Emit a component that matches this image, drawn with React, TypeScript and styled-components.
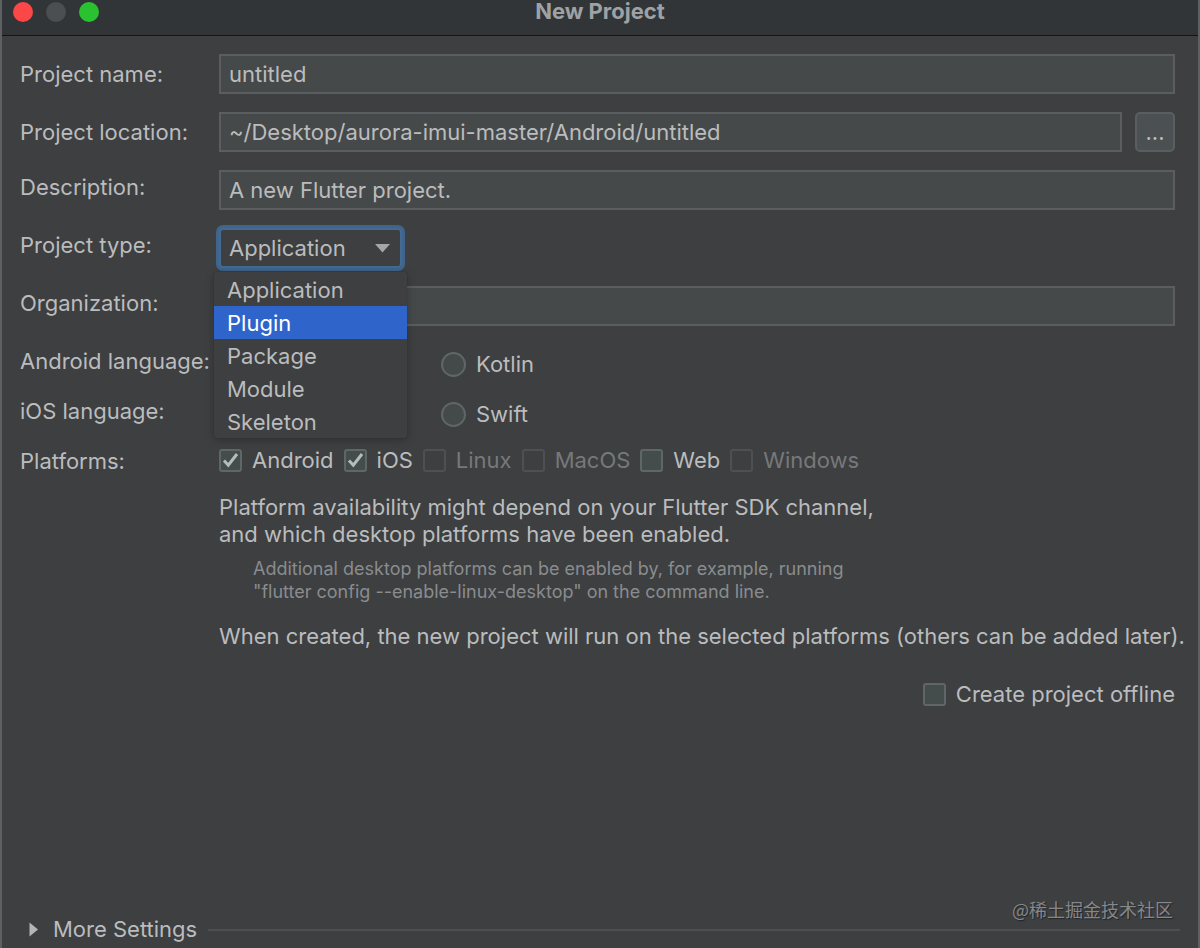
import React from "react";
import styled, { createGlobalStyle } from "styled-components";

const GlobalStyle = createGlobalStyle`
  * { box-sizing: border-box; }
  body {
    margin: 0;
    background: #3d3f41;
    color: #bbbcbd;
    font-family: Inter, "Noto Sans CJK SC", sans-serif;
    font-size: 22px;
    line-height: 27px;
  }
  input, button, select { font: inherit; color: inherit; margin: 0; }
`;

const Dialog = styled.div`
  position: relative;
  min-height: 100vh;
  display: flex;
  flex-direction: column;
  background: #3d3f41;
  border: solid #5d6062;
  border-width: 0 2px;
`;

const TitleBar = styled.header`
  display: grid;
  grid-template-columns: 1fr auto 1fr;
  height: 36px;
  background: #313537;
  border-bottom: 1px solid #131415;
`;

const Lights = styled.div`
  display: flex;
  gap: 13px;
  padding: 2px 0 0 11px;
`;

const Light = styled.button<{ $color: string }>`
  width: 20px;
  height: 20px;
  padding: 0;
  border: 0;
  border-radius: 50%;
  background: ${(p) => p.$color};
`;

const Title = styled.h1`
  margin: 0;
  font-size: 22px;
  line-height: 22px;
  font-weight: 700;
  color: #9fa2a4;
`;

const Form = styled.form`
  flex: 1;
  display: flex;
  flex-direction: column;
  padding: 18px 23px 0 18px;
`;

const Row = styled.div<{ $gap?: number }>`
  display: grid;
  grid-template-columns: 199px minmax(0, 1fr);
  align-items: start;
  margin-bottom: ${(p) => p.$gap ?? 18}px;
`;

const Label = styled.label<{ $height?: number }>`
  line-height: ${(p) => p.$height ?? 34}px;
  white-space: nowrap;
`;

const TextField = styled.input`
  display: block;
  width: 100%;
  min-width: 0;
  height: 40px;
  padding: 0 8px;
  background: #45494a;
  border: 2px solid #5a5e60;
  border-radius: 0;
  outline: none;
`;

const FieldGroup = styled.div`
  display: flex;
  gap: 13px;
`;

const BrowseButton = styled.button`
  flex: none;
  width: 40px;
  height: 40px;
  padding: 0;
  background: #4b5052;
  border: 2px solid #5a5e60;
  border-radius: 5px;
`;

const SelectWrap = styled.div`
  position: relative;
  width: 183px;
`;

const Select = styled.select`
  display: block;
  appearance: none;
  width: 100%;
  height: 40px;
  padding: 0 8px;
  background: #3d3f41;
  border: 2px solid #436a92;
  border-radius: 4px;
  box-shadow: 0 0 0 3px #3f658c;
  outline: none;
`;

const SelectArrow = styled.svg`
  position: absolute;
  top: 16px;
  right: 12px;
  pointer-events: none;
`;

const Menu = styled.ul`
  position: absolute;
  z-index: 2;
  top: 44px;
  left: -5px;
  width: 193px;
  margin: 0;
  padding: 1px 0 0;
  list-style: none;
  background: #3d3f41;
  border-radius: 2px;
  box-shadow: 0 2px 8px rgba(0, 0, 0, 0.25), 0 0 1px rgba(0, 0, 0, 0.4);
`;

const MenuItem = styled.li<{ $active?: boolean }>`
  padding: 2px 0 0 13px;
  line-height: 31px;
  background: ${(p) => (p.$active ? "#2f65ca" : "transparent")};
  color: ${(p) => (p.$active ? "#ffffff" : "inherit")};
`;

const RadioArea = styled.div`
  display: flex;
  align-items: center;
  height: 40px;
  padding-left: 222px;
`;

const Choice = styled.label<{ $disabled?: boolean }>`
  display: flex;
  align-items: center;
  gap: 10px;
  white-space: nowrap;
  color: ${(p) => (p.$disabled ? "#76797a" : "inherit")};
`;

const Radio = styled.input`
  appearance: none;
  width: 25px;
  height: 25px;
  background: #444a4a;
  border: 2px solid #5f6666;
  border-radius: 50%;
`;

const CheckBox = styled.span`
  display: grid;
  width: 23px;
  height: 23px;

  > * { grid-area: 1 / 1; }
  svg { pointer-events: none; }
`;

const CheckInput = styled.input`
  appearance: none;
  width: 23px;
  height: 23px;
  background: #444c4c;
  border: 2px solid #5f6666;
  border-radius: 3px;

  &:disabled {
    background: transparent;
    border-color: #4e5152;
  }
`;

const Platforms = styled.div`
  display: flex;
  align-items: center;
  gap: 10px;
  height: 33px;
`;

const Notes = styled.div`
  padding-left: 199px;
  white-space: nowrap;
`;

const Note = styled.p`
  margin: 0;
`;

const Hint = styled.p`
  margin: 9px 0 20px 34px;
  font-size: 18px;
  line-height: 23px;
  color: #8a8c8e;
`;

const OfflineRow = styled.div`
  display: flex;
  justify-content: flex-end;
  margin-top: 31px;
`;

const Footer = styled.footer`
  display: flex;
  align-items: center;
  gap: 11px;
  padding: 0 18px 5px 26px;
`;

const MoreButton = styled.button`
  display: flex;
  align-items: center;
  gap: 14px;
  padding: 0;
  border: 0;
  background: none;
`;

const Rule = styled.hr`
  flex: 1;
  margin: 0;
  border: 0;
  border-top: 2px solid #4d5052;
`;

const Watermark = styled.div`
  position: absolute;
  right: 25px;
  bottom: 25px;
  font-family: "Noto Sans CJK SC", sans-serif;
  font-size: 18px;
  color: #85878a;
  text-shadow: 1px 1px 1px #222426;
`;

type CheckProps = { label: string; checked?: boolean; disabled?: boolean };

function Check({ label, checked, disabled }: CheckProps) {
  return (
    <Choice $disabled={disabled}>
      <CheckBox>
        <CheckInput type="checkbox" defaultChecked={checked} disabled={disabled} />
        {checked && (
          <svg width="23" height="23" viewBox="0 0 23 23" fill="none">
            <path d="M5 11.5 9.300 16.200 18 5" stroke="#b4bcbc" strokeWidth="3" />
          </svg>
        )}
      </CheckBox>
      {label}
    </Choice>
  );
}

const projectTypes = ["Application", "Plugin", "Package", "Module", "Skeleton"];

const platforms: CheckProps[] = [
  { label: "Android", checked: true },
  { label: "iOS", checked: true },
  { label: "Linux", disabled: true },
  { label: "MacOS", disabled: true },
  { label: "Web" },
  { label: "Windows", disabled: true },
];

export default function App() {
  return (
    <Dialog>
      <GlobalStyle />
      <TitleBar>
        <Lights>
          <Light type="button" aria-label="Close" $color="#fc4748" />
          <Light type="button" aria-label="Minimize" $color="#4b4f51" />
          <Light type="button" aria-label="Zoom" $color="#2bc231" />
        </Lights>
        <Title>New Project</Title>
      </TitleBar>
      <Form>
        <Row>
          <Label htmlFor="name" $height={40}>Project name:</Label>
          <TextField id="name" defaultValue="untitled" />
        </Row>
        <Row>
          <Label htmlFor="location" $height={40}>Project location:</Label>
          <FieldGroup>
            <TextField id="location" defaultValue="~/Desktop/aurora-imui-master/Android/untitled" />
            <BrowseButton type="button" aria-label="Browse">...</BrowseButton>
          </FieldGroup>
        </Row>
        <Row>
          <Label htmlFor="description">Description:</Label>
          <TextField id="description" defaultValue="A new Flutter project." />
        </Row>
        <Row>
          <Label htmlFor="type">Project type:</Label>
          <SelectWrap>
            <Select id="type" defaultValue="Application">
              {projectTypes.map((t) => <option key={t}>{t}</option>)}
            </Select>
            <SelectArrow width="15" height="9" viewBox="0 0 15 9">
              <path d="M0 0H15L7.5 8.5Z" fill="#a4a6a8" />
            </SelectArrow>
            <Menu role="listbox" aria-label="Project type">
              {projectTypes.map((t) => (
                <MenuItem key={t} role="option" aria-selected={t === "Plugin"} $active={t === "Plugin"}>
                  {t}
                </MenuItem>
              ))}
            </Menu>
          </SelectWrap>
        </Row>
        <Row>
          <Label htmlFor="organization">Organization:</Label>
          <TextField id="organization" />
        </Row>
        <Row $gap={10}>
          <Label as="span">Android language:</Label>
          <RadioArea>
            <Choice><Radio type="radio" name="android" />Kotlin</Choice>
          </RadioArea>
        </Row>
        <Row $gap={10}>
          <Label as="span">iOS language:</Label>
          <RadioArea>
            <Choice><Radio type="radio" name="ios" />Swift</Choice>
          </RadioArea>
        </Row>
        <Row $gap={16}>
          <Label as="span">Platforms:</Label>
          <Platforms>
            {platforms.map((p) => <Check key={p.label} {...p} />)}
          </Platforms>
        </Row>
        <Notes>
          <Note>
            Platform availability might depend on your Flutter SDK channel,
            <br />
            and which desktop platforms have been enabled.
          </Note>
          <Hint>
            Additional desktop platforms can be enabled by, for example, running
            <br />
            "flutter config --enable-linux-desktop" on the command line.
          </Hint>
          <Note>
            When created, the new project will run on the selected platforms (others can be added later).
          </Note>
        </Notes>
        <OfflineRow>
          <Check label="Create project offline" />
        </OfflineRow>
      </Form>
      <Footer>
        <MoreButton type="button" aria-expanded="false">
          <svg width="11" height="15" viewBox="0 0 11 15">
            <path d="M1.500 0.500V14.500L10 7.500Z" fill="#b4b6b8" />
          </svg>
          More Settings
        </MoreButton>
        <Rule />
      </Footer>
      <Watermark>@稀土掘金技术社区</Watermark>
    </Dialog>
  );
}
